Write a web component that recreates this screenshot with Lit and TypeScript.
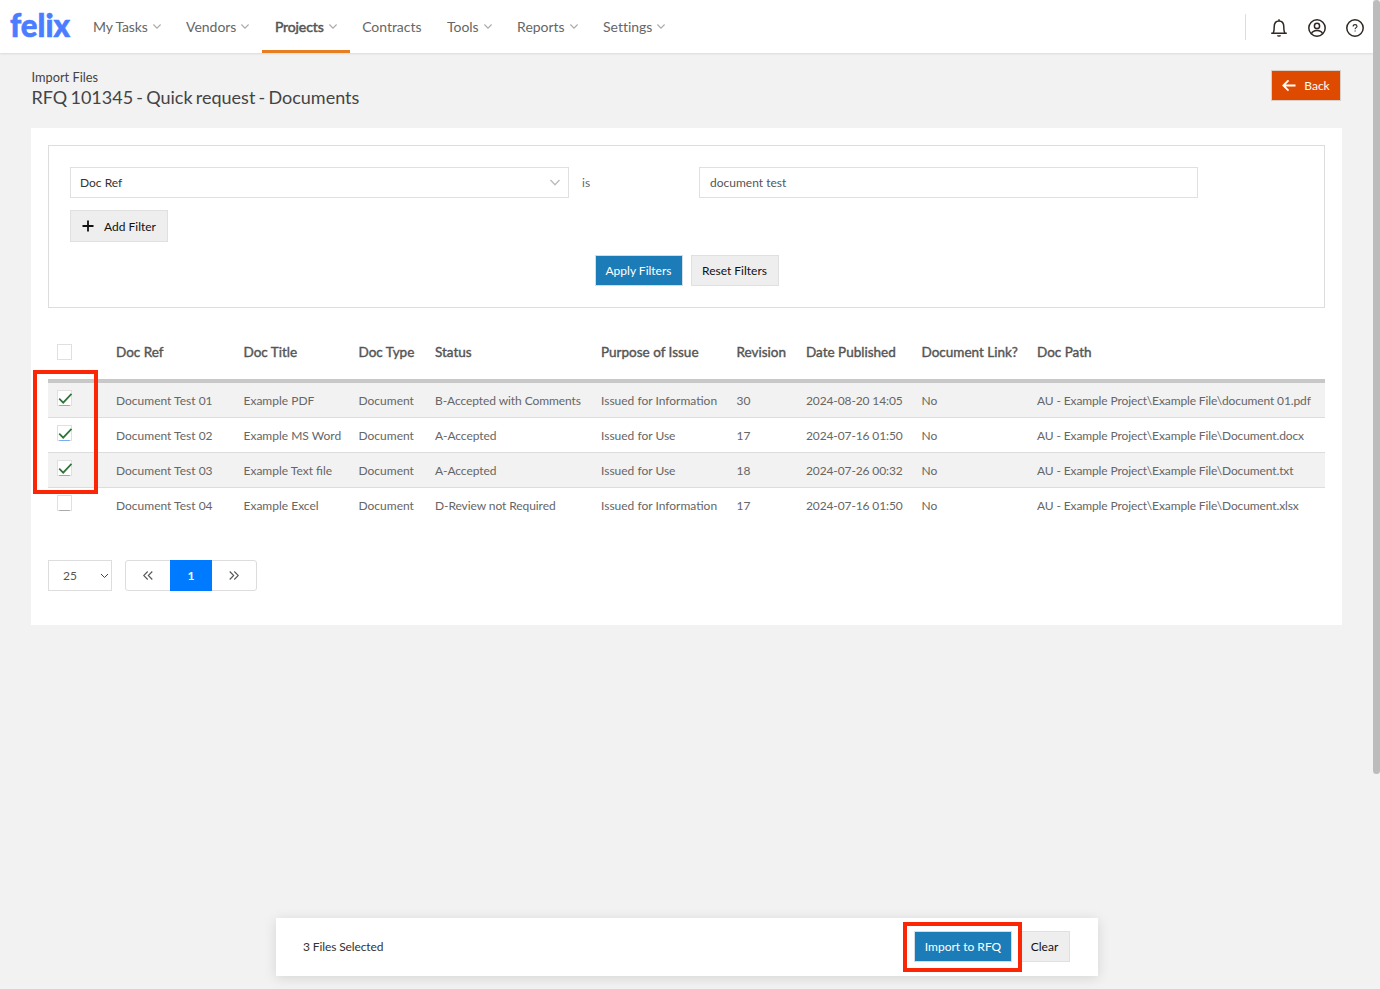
import { LitElement, html, css, svg, nothing } from 'lit';
import { customElement, property, state } from 'lit/decorators.js';
import { classMap } from 'lit/directives/class-map.js';

const chevron = html`
    <svg class="chevron" viewBox="0 0 8 5" width="8" height="5">
        <path d="M.4 .5 4 4.2 7.6 .5" fill="none" stroke="currentColor" stroke-width="1.1" />
    </svg>
`;

@customElement('app-navbar')
export class Navbar extends LitElement {
    static styles = css`
        :host {
            box-sizing: border-box;
            display: flex;
            justify-content: space-between;
            height: 53px;
            padding: 0 16px 0 10px;
            background: #fff;
            box-shadow: 0 1px 2px rgba(0, 0, 0, 0.1);
            color: #666;
        }
        .logo {
            display: block;
            flex: none;
            width: 70.5px;
            height: 53px;
            overflow: visible;
            fill: #4a7dff;
            stroke: #4a7dff;
            stroke-width: 0.6px;
            font: 900 32.5px 'Lato', sans-serif;
        }
        nav, .tools {
            display: flex;
        }
        a {
            box-sizing: border-box;
            display: flex;
            align-items: center;
            gap: 5px;
            height: 53px;
            padding: 0 13px 1px 12.5px;
            font-size: 14px;
            letter-spacing: -0.03px;
            white-space: nowrap;
        }
        a:first-of-type {
            letter-spacing: -0.15px;
        }
        a.active {
            border-bottom: 3px solid #e67e22;
            padding-top: 3px;
            color: #555;
        }
        a.active span {
            -webkit-text-stroke: 0.5px currentColor;
            letter-spacing: -0.1px;
        }
        .chevron {
            margin-top: 1px;
            color: #aaa;
        }
        .tools {
            align-items: center;
            gap: 18px;
        }
        .divider {
            width: 1px;
            height: 26px;
            background: #ddd;
            margin-right: 6px;
        }
        .tools svg {
            margin-top: 2px;
        }
        .tools .bell {
            margin-right: 1px;
        }
    `;

    items = [
        { label: 'My Tasks', menu: true },
        { label: 'Vendors', menu: true },
        { label: 'Projects', menu: true, active: true },
        { label: 'Contracts' },
        { label: 'Tools', menu: true },
        { label: 'Reports', menu: true },
        { label: 'Settings', menu: true },
    ];

    render() {
        return html`
            <nav>
                <svg class="logo"><text x="0" y="37" textLength="60" lengthAdjust="spacingAndGlyphs">felix</text></svg>
                ${this.items.map(item => html`
                    <a class=${classMap({ active: !!item.active })}><span>${item.label}</span>${item.menu ? chevron : nothing}</a>
                `)}
            </nav>
            <div class="tools">
                <div class="divider"></div>
                <svg class="bell" width="18" height="20" viewBox="0 0 18 20" fill="none" stroke="#2f2723" stroke-width="1.5" stroke-linejoin="round">
                    <path d="M1.2 15.2h15.6M3.2 15c1.1-1.6.9-3.4 1-6.2C4.3 5.5 6.2 3.1 9 3.1s4.7 2.4 4.8 5.7c.1 2.8-.1 4.6 1 6.2M9 1.2v2" />
                    <path d="M7 17.2a2 1.6 0 0 0 4 0z" fill="#2f2723" stroke="none" />
                </svg>
                <svg width="20" height="20" viewBox="0 0 20 20" fill="none" stroke="#2f2723" stroke-width="1.5">
                    <circle cx="10" cy="10" r="8.2" />
                    <circle cx="10" cy="7.9" r="2.6" />
                    <path d="M4.4 15.8c1-2.4 3-3.2 5.600-3.200s4.600.8 5.600 3.200" />
                </svg>
                <svg width="20" height="20" viewBox="0 0 20 20" fill="none" stroke="#2f2723" stroke-width="1.5">
                    <circle cx="10" cy="10" r="8.2" />
                    <path d="M8.1 8.400c0-2.500 3.900-2.300 3.900-.1 0 1.400-1.900 1.400-1.900 3M10.100 12.400v1.200" stroke-width="1.1" />
                </svg>
            </div>
        `;
    }
}

@customElement('app-button')
export class Button extends LitElement {
    static styles = css`
        :host {
            box-sizing: border-box;
            display: inline-flex;
            align-items: center;
            justify-content: center;
            height: 31px;
            border: 1px solid #e0e0e0;
            background: #eee;
            color: #111;
            font-size: 12px;
            white-space: nowrap;
        }
        :host([kind='primary']) {
            border-color: #d3dde5;
            background: #1c7cb8;
            color: #fff;
        }
        :host([kind='back']) {
            border-color: #d9cfc9;
            background: #de4b00;
            color: #fff;
        }
    `;

    @property({ reflect: true }) kind = 'default';

    render() {
        return html`<slot></slot>`;
    }
}

@customElement('app-checkbox')
export class Checkbox extends LitElement {
    static styles = css`
        :host {
            box-sizing: border-box;
            display: block;
            width: 15px;
            height: 16px;
            border: 1px solid #e0e0e0;
            background: #fff;
        }
        svg {
            display: block;
            overflow: visible;
        }
    `;

    @property({ type: Boolean }) checked = false;
    @property({ type: Boolean }) underline = false;

    render() {
        return html`
            <svg width="13" height="14" viewBox="0 0 13 14" fill="none">
                ${this.underline ? svg`<path d="M1.2 14.5h10.6" stroke=${this.checked ? '#78adf5' : '#aaa'} stroke-width="1" />` : nothing}
                ${this.checked ? svg`<path d="M1.2 7.7 5.2 11.7 13.5 2.8" stroke="#2f7438" stroke-width="1.7" />` : nothing}
            </svg>
        `;
    }
}

@customElement('app-root')
export class Root extends LitElement {
    static styles = css`
        :host {
            position: relative;
            box-sizing: border-box;
            display: flex;
            flex-direction: column;
            height: 989px;
            overflow: hidden;
            background: #f2f2f2;
            color: #666;
            font-family: 'Lato', sans-serif;
            font-size: 12px;
        }
        .scrollbar {
            position: absolute;
            right: 0;
            top: 0;
            width: 7px;
            height: 774px;
            border-radius: 4px;
            background: #bcbcbc;
        }
        app-navbar {
            flex: none;
            margin-right: 7px;
            padding-right: 8.5px;
        }
        header {
            display: flex;
            justify-content: space-between;
            height: 75px;
            box-sizing: border-box;
            padding: 17px 39px 0 31.5px;
            color: #444;
        }
        .crumb {
            font-size: 12.8px;
            line-height: 15px;
        }
        h1 {
            margin: 0;
            font-size: 18px;
            font-weight: 400;
            line-height: 24px;
            word-spacing: -1.4px;
        }
        .back {
            width: 70px;
            gap: 8px;
        }
        main {
            box-sizing: border-box;
            height: 497px;
            margin: 0 38px 0 31px;
            padding: 17px 17px 0;
            background: #fff;
        }
        .filters {
            box-sizing: border-box;
            height: 163px;
            padding: 21px;
            border: 1px solid #ddd;
        }
        .condition {
            display: flex;
            align-items: center;
        }
        .field {
            box-sizing: border-box;
            display: flex;
            align-items: center;
            justify-content: space-between;
            width: 499px;
            height: 31px;
            padding: 0 8px 0 9px;
            border: 1px solid #e0e0e0;
            color: #333;
        }
        .field.value {
            padding-left: 10px;
            color: #555;
        }
        .operator {
            width: 117px;
            padding-left: 13px;
        }
        .add {
            width: 98px;
            height: 32px;
            margin-top: 12px;
            gap: 10px;
        }
        .actions {
            display: flex;
            justify-content: center;
            gap: 8px;
            margin-top: 13px;
        }
        .actions app-button {
            width: 88px;
        }
        .table {
            margin-top: 17px;
        }
        .row {
            display: grid;
            grid-template-columns: 68px 127.5px 115px 76.5px 166px 135.5px 69.5px 115.5px 115.5px 1fr;
            align-items: center;
            box-sizing: border-box;
            height: 35px;
            padding-top: 1px;
            border-bottom: 1px solid #ddd;
            white-space: nowrap;
        }
        .row:not(.head) div:nth-child(5) {
            letter-spacing: -0.08px;
        }
        .row:not(.head) div:nth-child(8),
        .row:not(.head) div:nth-child(10) {
            letter-spacing: -0.12px;
        }
        .row app-checkbox {
            margin: -5px 0 0 9px;
        }
        .row:nth-child(even) {
            background: #f2f2f2;
        }
        .row:last-child {
            border-bottom-color: transparent;
        }
        .row.head {
            height: 58px;
            padding-top: 0;
            border-bottom: 4px solid #c8c8c8;
            color: #555;
            font-size: 13.5px;
            -webkit-text-stroke: 0.4px currentColor;
        }
        .row.head app-checkbox {
            margin-top: 0;
        }
        .paging {
            display: flex;
            gap: 13px;
            margin-top: 37px;
        }
        .size {
            box-sizing: border-box;
            display: flex;
            align-items: center;
            justify-content: space-between;
            width: 64px;
            height: 31px;
            padding: 0 2px 0 14px;
            border: 1px solid #ddd;
            color: #555;
        }
        .pages {
            box-sizing: border-box;
            display: flex;
            width: 132px;
            height: 31px;
            border: 1px solid #ddd;
            border-radius: 3px;
        }
        .pages div {
            flex: 1;
            display: flex;
            align-items: center;
            justify-content: center;
        }
        .pages .current {
            flex: none;
            width: 42px;
            margin: -1px 0;
            background: #007bff;
            color: #fff;
            font-weight: 700;
        }
        .selection {
            position: absolute;
            left: 276px;
            top: 918px;
            box-sizing: border-box;
            display: flex;
            align-items: center;
            width: 822px;
            height: 58px;
            padding: 0 28px 1px 27px;
            background: #fff;
            box-shadow: 0 2px 12px rgba(0, 0, 0, 0.12);
            color: #333;
        }
        .selection span {
            flex: 1;
            letter-spacing: -0.12px;
        }
        .import {
            width: 98px;
        }
        .clear {
            width: 51px;
            margin-left: 7px;
        }
        .marker {
            position: absolute;
            box-sizing: border-box;
            border: 4px solid #fb2605;
        }
        .marker.rows {
            left: 33px;
            top: 370px;
            width: 65px;
            height: 124px;
        }
        .marker.submit {
            left: 903px;
            top: 922px;
            width: 119px;
            height: 50px;
        }
    `;

    @state() docs = [
        { checked: true, cells: ['Document Test 01', 'Example PDF', 'Document', 'B-Accepted with Comments', 'Issued for Information', '30', '2024-08-20 14:05', 'No', 'AU - Example Project\\Example File\\document 01.pdf'] },
        { checked: true, cells: ['Document Test 02', 'Example MS Word', 'Document', 'A-Accepted', 'Issued for Use', '17', '2024-07-16 01:50', 'No', 'AU - Example Project\\Example File\\Document.docx'] },
        { checked: true, cells: ['Document Test 03', 'Example Text file', 'Document', 'A-Accepted', 'Issued for Use', '18', '2024-07-26 00:32', 'No', 'AU - Example Project\\Example File\\Document.txt'] },
        { checked: false, cells: ['Document Test 04', 'Example Excel', 'Document', 'D-Review not Required', 'Issued for Information', '17', '2024-07-16 01:50', 'No', 'AU - Example Project\\Example File\\Document.xlsx'] },
    ];

    columns = ['Doc Ref', 'Doc Title', 'Doc Type', 'Status', 'Purpose of Issue', 'Revision', 'Date Published', 'Document Link?', 'Doc Path'];

    render() {
        return html`
            <app-navbar></app-navbar>
            <header>
                <div>
                    <div class="crumb">Import Files</div>
                    <h1>RFQ 101345 - Quick request - Documents</h1>
                </div>
                <app-button class="back" kind="back">
                    <svg width="14" height="12" viewBox="0 0 14 12" fill="none" stroke="#fff" stroke-width="1.8">
                        <path d="M6.5 .3 1.3 5.500l5.200 5.200M1.300 5.500H13.500" />
                    </svg>
                    Back
                </app-button>
            </header>
            <main>
                <section class="filters">
                    <div class="condition">
                        <div class="field">
                            Doc Ref
                            <svg width="10" height="7" viewBox="0 0 10 7" fill="none" stroke="#bbb" stroke-width="1.3">
                                <path d="M.5 1 5 5.7 9.5 1" />
                            </svg>
                        </div>
                        <div class="operator">is</div>
                        <div class="field value">document test</div>
                    </div>
                    <app-button class="add">
                        <svg width="12" height="12" viewBox="0 0 12 12" stroke="#111" stroke-width="1.8">
                            <path d="M6 .5v11M.5 6h11" />
                        </svg>
                        Add Filter
                    </app-button>
                    <div class="actions">
                        <app-button kind="primary">Apply Filters</app-button>
                        <app-button>Reset Filters</app-button>
                    </div>
                </section>
                <section class="table">
                    <div class="row head">
                        <app-checkbox></app-checkbox>
                        ${this.columns.map(name => html`<div>${name}</div>`)}
                    </div>
                    ${this.docs.map(doc => html`
                        <div class="row">
                            <app-checkbox underline ?checked=${doc.checked}></app-checkbox>
                            ${doc.cells.map(cell => html`<div>${cell}</div>`)}
                        </div>
                    `)}
                </section>
                <div class="paging">
                    <div class="size">
                        25
                        <svg width="9" height="6" viewBox="0 0 9 6" fill="none" stroke="#444" stroke-width="1">
                            <path d="M1 1l3.5 3.5L8 1" />
                        </svg>
                    </div>
                    <div class="pages">
                        <div>
                            <svg width="10" height="9" viewBox="0 0 10 9" fill="none" stroke="#555" stroke-width="1.1">
                                <path d="M4.7 .5l-4 4 4 4M9.3 .5l-4 4 4 4" />
                            </svg>
                        </div>
                        <div class="current">1</div>
                        <div>
                            <svg width="10" height="9" viewBox="0 0 10 9" fill="none" stroke="#555" stroke-width="1.1">
                                <path d="M.7 .5l4 4-4 4M5.3 .5l4 4-4 4" />
                            </svg>
                        </div>
                    </div>
                </div>
            </main>
            <div class="selection">
                <span>${this.docs.filter(doc => doc.checked).length} Files Selected</span>
                <app-button class="import" kind="primary">Import to RFQ</app-button>
                <app-button class="clear">Clear</app-button>
            </div>
            <div class="marker rows"></div>
            <div class="marker submit"></div>
            <div class="scrollbar"></div>
        `;
    }
}
